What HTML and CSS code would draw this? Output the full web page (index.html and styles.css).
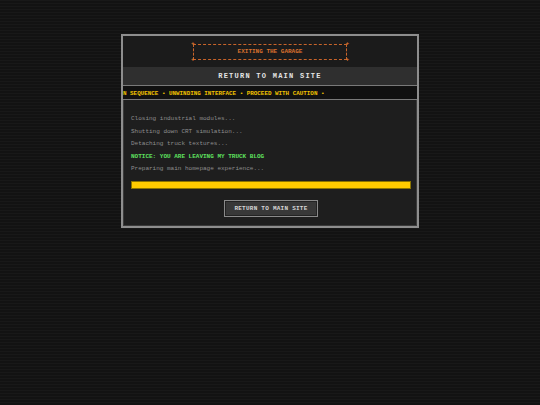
FILE: index.html
```html
<!DOCTYPE html>
<html>
<head>
<meta charset="utf-8">
<link rel="stylesheet" href="styles.css">
</head>
<body>
<div class="page">
  <div class="panel">
    <div class="top">
      <div class="badge">
        <span class="corner tl">+</span><span class="corner tr">+</span><span class="corner bl">+</span><span class="corner br">+</span>
        EXITING THE GARAGE
      </div>
    </div>
    <div class="title">RETURN TO MAIN SITE</div>
    <div class="ticker"><span class="ticker-text">N SEQUENCE • UNWINDING INTERFACE • PROCEED WITH CAUTION •</span></div>
    <div class="content">
      <div class="log">
        <div class="line">Closing industrial modules...</div>
        <div class="line">Shutting down CRT simulation...</div>
        <div class="line">Detaching truck textures...</div>
        <div class="line notice">NOTICE: YOU ARE LEAVING MY TRUCK BLOG</div>
        <div class="line">Preparing main homepage experience...</div>
      </div>
      <div class="bar"><div class="fill"></div></div>
      <div class="actions"><button class="btn">RETURN TO MAIN SITE</button></div>
    </div>
  </div>
</div>
</body>
</html>
```
FILE: styles.css
```css
html, body {
  margin: 0;
  padding: 0;
}
body {
  width: 540px;
  height: 405px;
  overflow: hidden;
  background-color: #151515;
  background-image: repeating-linear-gradient(to bottom, #181818 0px, #181818 1px, #121212 1px, #121212 3px);
  font-family: "Liberation Mono", "DejaVu Sans Mono", monospace;
}
.page {
  padding-top: 34px;
  display: flex;
  justify-content: center;
}
.panel {
  width: 294px;
  border: 2px solid #8e8e8e;
  box-shadow: inset 0 0 0 1px #3a3a3a;
  background: #1e1e1e;
  display: flex;
  flex-direction: column;
}
.top {
  background: #1b1b1b;
  padding: 8px 0 7px;
  display: flex;
  justify-content: center;
}
.badge {
  position: relative;
  width: 152px;
  height: 14px;
  border: 1px dashed #c8642a;
  color: #d8702e;
  font-size: 6px;
  font-weight: bold;
  line-height: 14px;
  text-align: center;
}
.corner {
  position: absolute;
  font-size: 6px;
  line-height: 6px;
  color: #e07a32;
}
.tl { left: -3px; top: -4px; }
.tr { right: -3px; top: -4px; }
.bl { left: -3px; bottom: -4px; }
.br { right: -3px; bottom: -4px; }
.title {
  background: #2f2f2f;
  height: 18px;
  line-height: 18px;
  border-bottom: 1px solid #7a7a7a;
  color: #e4e4e4;
  font-size: 7px;
  font-weight: bold;
  letter-spacing: 1.25px;
  text-align: center;
}
.ticker {
  background: #111111;
  height: 14px;
  line-height: 11px;
  padding-bottom: 2px;
  box-sizing: border-box;
  border-bottom: 1px solid #7a7a7a;
  overflow: hidden;
  white-space: nowrap;
}
.ticker-text {
  color: #f2c200;
  font-size: 5.9px;
  font-weight: bold;
}
.content {
  padding: 13px 6px 9px 8px;
  display: flex;
  flex-direction: column;
}
.line {
  font-size: 6px;
  line-height: 12.5px;
  color: #8e8e8e;
}
.line.notice {
  color: #5ee05e;
  font-weight: bold;
}
.bar {
  margin-top: 5px;
  height: 6px;
  border: 1px solid #8a7400;
  background: #2a2a2a;
}
.fill {
  width: 100%;
  height: 100%;
  background: #ffcb00;
}
.actions {
  margin-top: 11px;
  display: flex;
  justify-content: center;
}
.btn {
  width: 94px;
  height: 17px;
  padding: 0;
  background: #383838;
  border: 1px solid #8a8a8a;
  box-shadow: inset 0 0 0 1px #222;
  color: #d6d6d6;
  font-family: "Liberation Mono", "DejaVu Sans Mono", monospace;
  font-size: 6px;
  font-weight: bold;
  letter-spacing: 0.25px;
  text-align: center;
}
```
